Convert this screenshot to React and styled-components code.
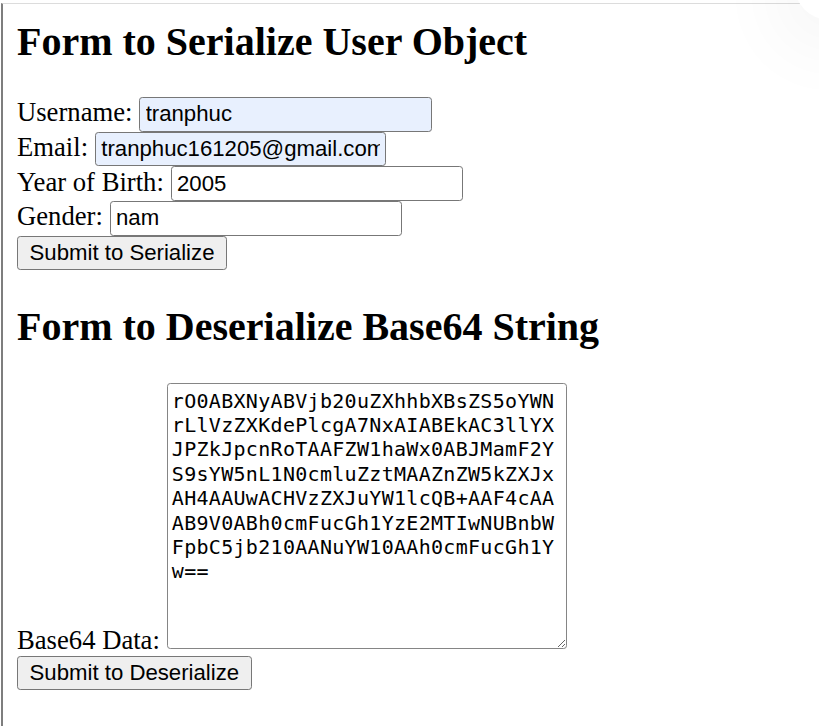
import React from 'react';
import styled, { createGlobalStyle } from 'styled-components';

const GlobalStyle = createGlobalStyle`
  html, body { margin: 0; padding: 0; background: #fff; }
  body {
    font-family: "Liberation Serif", "Times New Roman", serif;
    font-size: 26.67px;
    color: #000;
    overflow: hidden;
  }
`;

const Frame = styled.div`
  position: relative;
  margin: 3px 0 0 1px;
  min-height: 723px;
  box-sizing: border-box;
  border-top: 1px solid #dcdcdc;
  border-left: 2px solid #7e7e7e;
  padding: 15px 0 0 14px;
`;

const Bubble = styled.div`
  position: fixed;
  left: 794px;
  top: -52px;
  width: 72px;
  height: 72px;
  border-radius: 50%;
  background: #fff;
  box-shadow: 0 12px 70px 24px rgba(0, 0, 0, 0.035);
`;

const Heading = styled.h2`
  margin: ${p => p.$gap}px 0 0;
  font-family: "Liberation Serif", "Times New Roman", serif;
  font-size: 40px;
  line-height: 46px;
  font-weight: bold;
`;

const SerializeForm = styled.form`
  margin: 32px 0 0;
  display: flex;
  flex-direction: column;
  align-items: flex-start;
`;

const Field = styled.div`
  display: flex;
  align-items: baseline;
  gap: 6.67px;
  height: 34.67px;
`;

const Label = styled.label`
  font-family: "Liberation Serif", "Times New Roman", serif;
  font-size: 26.67px;
  white-space: nowrap;
`;

const TextInput = styled.input`
  box-sizing: border-box;
  width: ${p => p.$w || 292}px;
  height: 34.67px;
  margin: 0;
  padding: 1.67px 4.5px 1.67px 5.5px;
  border: 1.5px solid #777;
  border-radius: 3.3px;
  font-family: "Liberation Sans", Arial, sans-serif;
  font-size: 22.2px;
  color: #000;
  background: ${p => (p.$filled ? '#e8f0fe' : '#fff')};
  outline: none;
`;

const Button = styled.button`
  box-sizing: border-box;
  height: 34px;
  margin: 0;
  padding: 0 11.5px;
  border: 1.5px solid #777;
  border-radius: 3.3px;
  background: #efefef;
  font-family: "Liberation Sans", Arial, sans-serif;
  font-size: 22.2px;
  color: #000;
  cursor: default;
`;

const DeserializeForm = styled.form`
  margin: 33.5px 0 0;
`;

const DataRow = styled.div`
  font-family: "Liberation Serif", "Times New Roman", serif;
  font-size: 26.67px;
`;

const DataArea = styled.textarea`
  box-sizing: border-box;
  width: 400px;
  height: 266px;
  margin: 0 0 0 6.67px;
  padding: 4.5px 3.33px 3.33px 4.3px;
  border: 1.5px solid #858585;
  border-radius: 3.3px;
  font-family: "DejaVu Sans Mono", "Liberation Mono", monospace;
  font-size: 20px;
  letter-spacing: 0.3px;
  line-height: 24.4px;
  vertical-align: baseline;
  word-break: break-all;
  color: #000;
  background: #fff;
  outline: none;
`;

const ButtonRow = styled.div`
  display: flex;
`;

const BASE64 =
  'rO0ABXNyABVjb20uZXhhbXBsZS5oYWNrLlVzZXKdePlcgA7NxAIABEkAC3llYXJPZkJpcnRoTAAFZW1haWx0ABJMamF2YS9sYW5nL1N0cmluZztMAAZnZW5kZXJxAH4AAUwACHVzZXJuYW1lcQB+AAF4cAAAB9V0ABh0cmFucGh1YzE2MTIwNUBnbWFpbC5jb210AANuYW10AAh0cmFucGh1Yw==';

export default function App() {
  return (
    <>
      <GlobalStyle />
      <Frame>
        <Heading $gap={0}>Form to Serialize User Object</Heading>
        <SerializeForm onSubmit={e => e.preventDefault()}>
          <Field>
            <Label>Username:</Label>
            <TextInput $filled $w={293} defaultValue="tranphuc" />
          </Field>
          <Field>
            <Label>Email:</Label>
            <TextInput $filled $w={291} defaultValue="tranphuc161205@gmail.com" />
          </Field>
          <Field>
            <Label>Year of Birth:</Label>
            <TextInput defaultValue="2005" />
          </Field>
          <Field>
            <Label>Gender:</Label>
            <TextInput defaultValue="nam" />
          </Field>
          <Button type="submit">Submit to Serialize</Button>
        </SerializeForm>

        <Heading $gap={34}>Form to Deserialize Base64 String</Heading>
        <DeserializeForm onSubmit={e => e.preventDefault()}>
          <DataRow>
            <Label>Base64 Data:</Label>
            <DataArea defaultValue={BASE64} spellCheck={false} />
          </DataRow>
          <ButtonRow>
            <Button type="submit">Submit to Deserialize</Button>
          </ButtonRow>
        </DeserializeForm>
      </Frame>
      <Bubble />
    </>
  );
}
